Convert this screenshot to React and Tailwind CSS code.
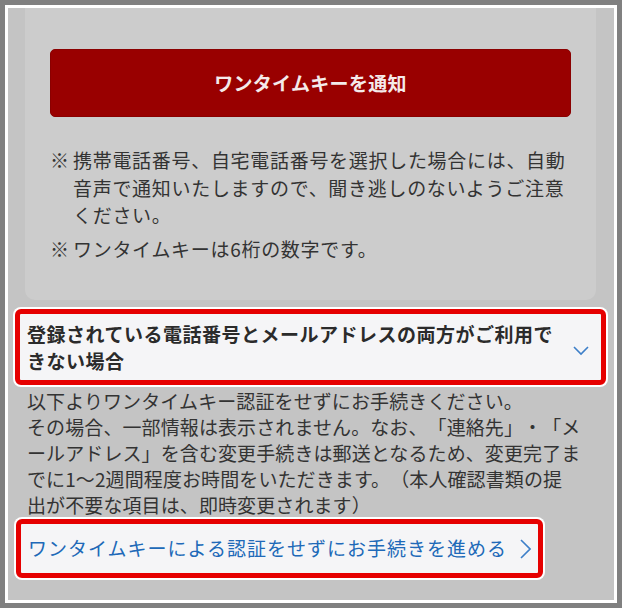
const font = { fontFamily: '"Noto Sans CJK JP", "Noto Sans", sans-serif' };

const Note = ({ children, className = '' }) => (
  <div className={`flex ${className}`}>
    <span className="w-[23px] shrink-0">※</span>
    <span className="whitespace-nowrap">{children}</span>
  </div>
);

const App = () => {
  return (
    <div className="w-[622px] h-[608px] bg-[#808080] p-[5px] [text-spacing-trim:space-all]" style={font}>
      <div className="h-full bg-white p-[3px]">
        <div className="h-full bg-[#c4c4c4] pr-[6px] pl-[5px]">
          {/* パネル */}
          <div className="mx-[12px] h-[292px] rounded-b-[10px] bg-[#cccccc] px-[25px] pt-[41px]">
            <button className="w-full h-[68px] rounded-[5px] bg-[#990000] border border-[#8a0000] text-[#f4eaea] font-bold text-[19px] tracking-[0.3px]">
              ワンタイムキーを通知
            </button>
            <div className="mt-[29px] text-[19px] tracking-[0.7px] leading-[27.5px] text-[#333333]">
              <Note>
                携帯電話番号、自宅電話番号を選択した場合には、自動<br />
                音声で通知いたしますので、聞き逃しのないようご注意<br />
                ください。
              </Note>
              <Note className="mt-[6px]">ワンタイムキーは6桁の数字です。</Note>
            </div>
          </div>

          {/* 見出し */}
          <div className="mt-[7px] rounded-[8px] bg-white p-[2px]">
            <div className="flex items-center rounded-[6px] border-[5px] border-[#e60000] bg-[#f5f5f7] pl-[7px] pr-[12px] py-[6px]">
              <p className="flex-1 whitespace-nowrap font-bold text-[19px] tracking-[0.5px] leading-[27px] text-[#2b2b2b]">
                登録されている電話番号とメールアドレスの両方がご利用で<br />
                きない場合
              </p>
              <svg width="16" height="10" viewBox="0 0 16 10" className="mt-[8px]">
                <polyline points="1,1 8,8 15,1" fill="none" stroke="#3d7fc8" strokeWidth="1.6" />
              </svg>
            </div>
          </div>

          {/* 本文 */}
          <p className="mt-[1px] pl-[14px] whitespace-nowrap text-[19px] tracking-[0.1px] leading-[26px] text-[#333333]">
            以下よりワンタイムキー認証をせずにお手続きください。<br />
            その場合、一部情報は表示されません。なお、「連絡先」・「メ<br />
            ールアドレス」を含む変更手続きは郵送となるため、変更完了ま<br />
            でに1〜2週間程度お時間をいただきます。（本人確認書類の提<br />
            出が不要な項目は、即時変更されます）
          </p>

          {/* リンク */}
          <div className="mt-[-1px] ml-[1px] inline-block rounded-[8px] bg-white p-[2px]">
            <a className="flex items-center gap-[13px] rounded-[6px] border-[5px] border-[#e60000] bg-[#f5f5f7] pl-[7px] pr-[7px] h-[59px] text-[19px] tracking-[1px] text-[#2069b8] whitespace-nowrap">
              ワンタイムキーによる認証をせずにお手続きを進める
              <svg width="11" height="20" viewBox="0 0 11 20">
                <polyline points="1,1 10,10 1,19" fill="none" stroke="#3d7fc8" strokeWidth="1.6" />
              </svg>
            </a>
          </div>
        </div>
      </div>
    </div>
  );
};

export default App;
